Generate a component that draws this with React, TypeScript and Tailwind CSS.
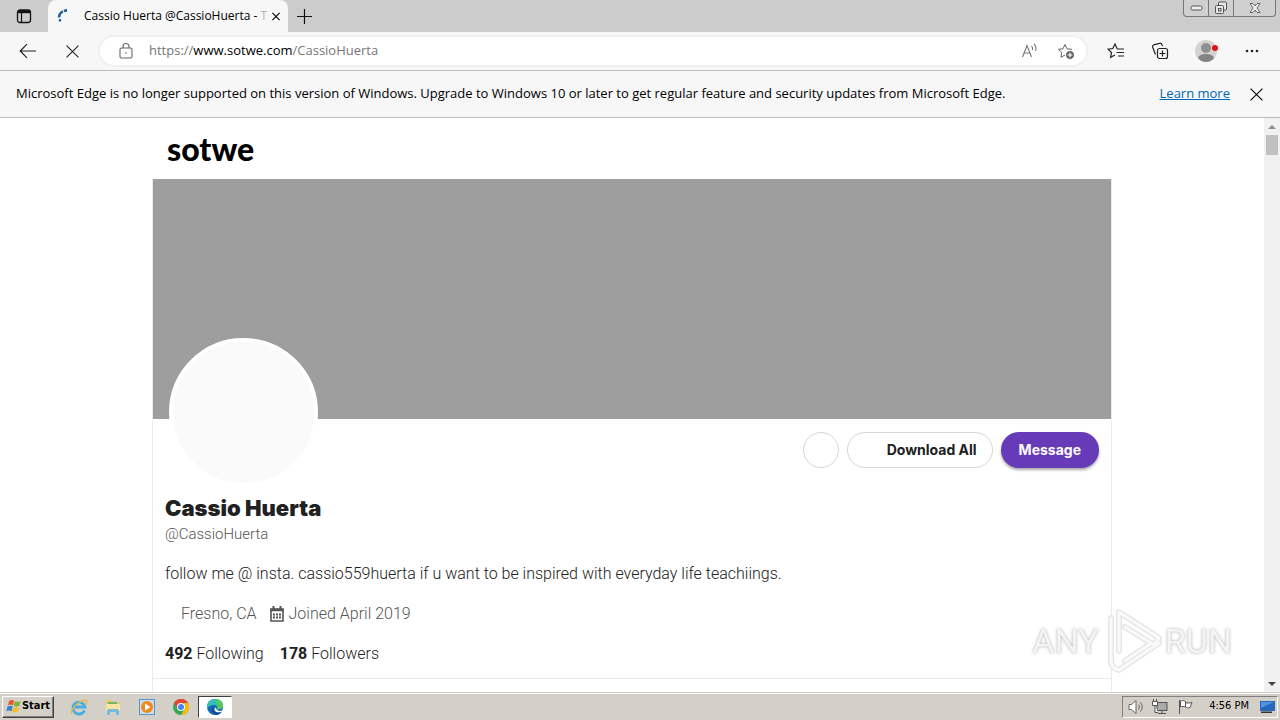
import type { ReactNode } from "react";
import { clsx } from "clsx";

interface IconButtonProps {
  label: string;
  className?: string;
  children: ReactNode;
}

function IconButton({ label, className, children }: IconButtonProps) {
  return (
    <button
      type="button"
      aria-label={label}
      className={clsx("flex shrink-0 items-center justify-center", className)}
    >
      {children}
    </button>
  );
}

function CrossIcon({ size, width = 1 }: { size: number; width?: number }) {
  return (
    <svg width={size} height={size} viewBox="0 0 12 12" fill="none" stroke="currentColor" strokeWidth={width}>
      <path d="M.5.5l11 11M11.5.5l-11 11" />
    </svg>
  );
}

function TabStrip() {
  return (
    <div className="flex h-8 shrink-0 items-start bg-[#cccccc]">
      <IconButton label="Tab actions" className="h-8 w-12">
        <svg width="16" height="16" viewBox="0 0 16 16" fill="none" stroke="#111">
          <rect x="1.5" y="2" width="13" height="12.5" rx="2.5" strokeWidth="1.3" />
          <path d="M2 3.7h12" strokeWidth="3" />
          <path d="M5.5 5v9" strokeWidth="1.2" />
        </svg>
      </IconButton>
      <div className="flex h-8 w-60 items-center rounded-t-lg bg-[#f7f7f7] pr-2 pl-2">
        <svg width="16" height="16" viewBox="0 0 16 16" fill="none" stroke="#1c639b" strokeWidth="2.6" className="shrink-0">
          <path d="M3 9.500C3.200 6 5 4.200 7 3.400" />
          <path d="M8 3c1-.4 2-.6 3-.6" />
          <circle cx="4" cy="12.300" r=".7" strokeWidth="1.400" />
        </svg>
        <span className="ml-3 w-[183px] whitespace-nowrap text-[12px] text-black">
          Cassio Huerta @CassioHuerta - <span className="text-[#b5b5b5]">T</span>
        </span>
        <IconButton label="Close tab" className="ml-auto h-4 w-2 text-black">
          <CrossIcon size={9} width={1.8} />
        </IconButton>
      </div>
      <IconButton label="New tab" className="h-8 w-8">
        <svg width="15" height="15" viewBox="0 0 15 15" stroke="#111" strokeWidth="1.2">
          <path d="M7.5 0v15M0 7.5h15" />
        </svg>
      </IconButton>
      <div className="mr-1 ml-auto flex h-[17px] divide-x divide-[#777] overflow-hidden rounded-b border border-t-0 border-[#777] bg-[#d0d0d0]">
        <IconButton label="Minimize" className="w-[25px]">
          <svg width="13" height="6" viewBox="0 0 13 6" fill="#eee" stroke="#555">
            <rect x="1" y="1" width="11" height="4" rx="1.5" />
          </svg>
        </IconButton>
        <IconButton label="Restore" className="w-[25px]">
          <svg width="14" height="14" viewBox="0 0 14 14" fill="#e6e6e6" stroke="#555">
            <rect x="4.5" y="1" width="8" height="8" rx="1" />
            <rect x="1.5" y="4.5" width="8" height="8" rx="1" />
            <rect x="4.5" y="7.5" width="2.5" height="2.5" />
          </svg>
        </IconButton>
        <IconButton label="Close window" className="w-[41px]">
          <svg width="12" height="10" viewBox="0 0 12 10" fill="#eee" stroke="#666">
            <path d="M1 .5h3L6 3 8 .5h3L8 5l3 4.500H8L6 7 4 9.500H1L4 5z" />
          </svg>
        </IconButton>
      </div>
    </div>
  );
}

const STAR = "M8 1.500l2 4.300 4.600.5-3.400 3.200.9 4.800L8 12l-4.100 2.300.9-4.800L1.400 6.300 6 5.800z";

function Toolbar() {
  return (
    <div className="flex h-[39px] shrink-0 items-center border-b border-[#bdbdbd] bg-[#f7f7f7] pl-[6px] text-[#222]">
      <IconButton label="Back" className="h-8 w-11">
        <svg width="18" height="16" viewBox="0 0 18 16" fill="none" stroke="currentColor" strokeWidth="1.2">
          <path d="M17 8H1.500M8 1.200L1.200 8 8 14.800" />
        </svg>
      </IconButton>
      <IconButton label="Stop" className="h-8 w-11">
        <CrossIcon size={13} />
      </IconButton>
      <div className="ml-1 flex h-8 min-w-0 flex-1 items-center rounded-full border-2 border-[#f0f0f0] bg-white pl-[18px]">
        <svg width="16" height="18" viewBox="0 0 16 18" fill="none" stroke="#666" strokeWidth="1.1" className="shrink-0">
          <rect x="2" y="6" width="12" height="10" rx="1.5" />
          <path d="M5 6V4.500a3 3 0 016 0V6" />
          <circle cx="8" cy="11" r=".8" fill="#666" stroke="none" />
        </svg>
        <div className="relative ml-[15px] min-w-0 flex-1 text-[13px]">
          <div aria-hidden="true" className="whitespace-nowrap text-[#767676]">
            https://<span className="text-black">www.sotwe.com</span>/CassioHuerta
          </div>
          <input
            aria-label="Address"
            defaultValue="https://www.sotwe.com/CassioHuerta"
            className="absolute inset-0 w-full bg-transparent text-transparent outline-none"
          />
        </div>
        <IconButton label="Read aloud" className="h-7 w-9 text-[#777]">
          <svg width="18" height="16" viewBox="0 0 18 16" fill="none" stroke="currentColor" strokeWidth="1.1">
            <path d="M1.500 14L6 2.500 10.500 14M3 10h6" />
            <path d="M10.500 3q1.500 1.500 1 4M13 1q3 3 1.500 7" />
          </svg>
        </IconButton>
        <IconButton label="Add to favorites" className="mr-[2px] h-7 w-9 text-[#666]">
          <svg width="18" height="17" viewBox="0 0 18 17" fill="none" stroke="currentColor">
            <path d={STAR} />
            <circle cx="13" cy="12" r="4.5" fill="#666" stroke="#fff" />
            <path d="M13 9.700v4.600M10.700 12h4.600" stroke="#fff" strokeWidth="1.2" />
          </svg>
        </IconButton>
      </div>
      <IconButton label="Favorites" className="ml-[6px] h-8 w-11">
        <svg width="18" height="16" viewBox="0 0 18 16" fill="none" stroke="currentColor" strokeWidth="1.2">
          <path d="M10.500 5.500H10L8 1 5.800 5.500 1 6.200l3.500 3.300-.9 4.900L8 12" />
          <path d="M10 6h7M9.500 9.500H17M11 13h6" />
        </svg>
      </IconButton>
      <IconButton label="Collections" className="h-8 w-11">
        <svg width="18" height="18" viewBox="0 0 18 18" fill="none" stroke="currentColor" strokeWidth="1.2">
          <rect x="6.5" y="6.5" width="10" height="10" rx="2" />
          <path d="M11.500 8.500v6M8.500 11.500h6M4.500 12.500L1.700 5.300a2 2 0 011.100-2.500l5.600-1.500a2 2 0 012.500 1.200l.6 1.500" />
        </svg>
      </IconButton>
      <IconButton label="Profile" className="h-8 w-12">
        <svg width="26" height="24" viewBox="0 0 26 24">
          <circle cx="13" cy="12" r="11" fill="#d5d3d1" />
          <circle cx="13" cy="9" r="5" fill="#918f91" />
          <path d="M5 19c1-3 4-4 8-4s7 1 8 4c-2 2.500-5 4-8 4s-6-1.500-8-4z" fill="#858385" />
          <circle cx="22" cy="9" r="3" fill="#e3101c" />
        </svg>
      </IconButton>
      <IconButton label="Settings and more" className="mr-[6px] h-8 w-11">
        <svg width="14" height="4" viewBox="0 0 14 4" fill="currentColor">
          <circle cx="2" cy="2" r="1.3" />
          <circle cx="7" cy="2" r="1.3" />
          <circle cx="12" cy="2" r="1.3" />
        </svg>
      </IconButton>
    </div>
  );
}

function InfoBar() {
  return (
    <div className="flex h-[47px] shrink-0 items-center border-b border-[#bdbdbd] bg-[#f7f7f7] pr-3 pl-4 text-[13px] text-black">
      <p className="flex-1 whitespace-nowrap">
        Microsoft Edge is no longer supported on this version of Windows. Upgrade to Windows 10 or later to get regular
        feature and security updates from Microsoft Edge.
      </p>
      <a href="#learn-more" className="text-[#0067b8] underline">
        Learn more
      </a>
      <IconButton label="Dismiss" className="ml-[14px] h-6 w-6">
        <CrossIcon size={13} />
      </IconButton>
    </div>
  );
}

function CalendarIcon() {
  return (
    <svg width="16" height="16" viewBox="0 0 16 16" fill="none" stroke="#555" className="shrink-0">
      <path d="M2 3h12v12H2z" strokeWidth="1.6" />
      <path d="M1.500 4h13" strokeWidth="2.5" />
      <path d="M4.500 0v3M11.500 0v3" strokeWidth="2" />
      <path d="M4 8.500h8M4 11.500h8" strokeWidth="1.8" strokeDasharray="2 1" />
    </svg>
  );
}

function Profile() {
  return (
    <main className="mx-auto max-w-[960px] font-['Roboto','Liberation_Sans',sans-serif] font-light text-[#212121]">
      <header className="flex h-[61px] items-center px-[15px]">
        <a href="#home" className="font-['Lato',sans-serif] text-[32px] leading-8 font-black text-black">
          sotwe
        </a>
      </header>
      <section className="border-x border-[#ebebeb]">
        <div className="h-60 bg-[#9e9e9e]" />
        <div className="flex items-start justify-between pr-3 pl-4">
          <div className="-mt-[81px] h-[149px] w-[149px] rounded-full border-4 border-white bg-[#fafafa]" />
          <div className="mt-[13px] flex gap-2 font-['Inter',sans-serif] text-[14px] leading-5 font-bold">
            <button type="button" aria-label="Refresh" className="h-9 w-9 rounded-full border border-[#d6d6d6]" />
            <button type="button" className="h-9 rounded-full border border-[#d6d6d6] pr-[15px] pl-[39px]">
              Download All
            </button>
            <button
              type="button"
              className="h-9 rounded-full bg-[#673ab7] px-[18px] text-white shadow-[0_2px_3px_rgba(0,0,0,0.35)]"
            >
              Message
            </button>
          </div>
        </div>
        <div className="border-b border-[#ebebeb] px-3 pb-3">
          <h1 className="mt-[7px] font-['Inter',sans-serif] text-[22px] leading-7 font-black">Cassio Huerta</h1>
          <p className="text-[15px] leading-6 text-[#555]">@CassioHuerta</p>
          <p className="mt-4 text-[16px] leading-6">
            follow me @ insta. cassio559huerta if u want to be inspired with everyday life teachiings.
          </p>
          <div className="mt-4 flex gap-3 pl-4 text-[16px] leading-6 text-[#555]">
            <span>Fresno, CA</span>
            <span className="flex items-center gap-1">
              <CalendarIcon />
              Joined April 2019
            </span>
          </div>
          <div className="mt-4 flex gap-4 text-[16px] leading-6">
            <a href="#following">
              <b className="font-bold">492</b> Following
            </a>
            <a href="#followers">
              <b className="font-bold">178</b> Followers
            </a>
          </div>
        </div>
        <div className="h-10" />
      </section>
    </main>
  );
}

function Scrollbar() {
  return (
    <div className="flex w-4 shrink-0 flex-col items-center bg-[#f1f1f1]">
      <svg width="16" height="17" viewBox="0 0 16 17" fill="#8c8c8c">
        <path d="M4 11l4-4 4 4z" />
      </svg>
      <div className="h-5 w-3 bg-[#c1c1c1]" />
      <svg width="16" height="17" viewBox="0 0 16 17" fill="#444" className="mt-auto">
        <path d="M4 7l4 4 4-4z" />
      </svg>
    </div>
  );
}

function Watermark() {
  const play = "M20 5l40 26-5 7-29-18M20 5v39M12 11v45M20 63l40-27M26 54l25-17M12 56q3 6 8 7";
  return (
    <div className="pointer-events-none absolute right-12 bottom-4 flex items-center font-['Roboto',sans-serif] text-[34px] leading-[70px] text-[#f4f4f4] [text-shadow:0_0_3px_#aaa]">
      <span>ANY</span>
      <svg width="66" height="68" viewBox="0 0 66 68" fill="none" strokeLinejoin="round" strokeLinecap="round">
        <path d={play} stroke="#e6e6e6" strokeWidth="6" />
        <path d={play} stroke="#fafafa" strokeWidth="3" />
      </svg>
      <span>RUN</span>
    </div>
  );
}

function WindowsFlag() {
  return (
    <svg width="16" height="15" viewBox="0 0 15 14" className="shrink-0">
      <path d="M3 1.500c2-1 3-.8 4.500.2L6.500 6C5 5 3.500 5 1.800 5.800z" fill="#e8562a" />
      <path d="M8.300 2c1.700 1 3.400 1 5.500 0l-1.200 4.300c-2 1-3.700.9-5.300 0z" fill="#7ab536" />
      <path d="M1.500 6.800c2-.8 3.200-.8 4.800.2L5.200 11.500C3.600 10.500 2.200 10.500.3 11.300z" fill="#3a7fd0" />
      <path d="M7 7.400c1.600.9 3.300 1 5.300.1L11 12c-2 .9-3.500.8-5.200-.1z" fill="#f6bd27" />
    </svg>
  );
}

const taskbarApps: { name: string; icon: ReactNode }[] = [
  {
    name: "Internet Explorer",
    icon: (
      <svg width="18" height="18" viewBox="0 0 18 18" fill="none">
        <path d="M14.500 12.500a6 6 0 11.400-3.500H5" stroke="#45aee5" strokeWidth="2.8" />
        <path d="M2 16C-1 13 9 2 16 2c2 1 0 4-1 5" stroke="#e7b83e" strokeWidth="1.3" />
      </svg>
    ),
  },
  {
    name: "Windows Explorer",
    icon: (
      <svg width="18" height="18" viewBox="0 0 18 18">
        <path d="M2 2h6l1 2h7v10H2z" fill="#e9cc69" />
        <path d="M4 4h9v4H4z" fill="#6db36b" />
        <path d="M2 6h14v7H2z" fill="#f7e6a2" />
        <path d="M3 17v-4q0-2 2-2h8q2 0 2 2v4h-3v-3H6v3z" fill="#78b9de" />
      </svg>
    ),
  },
  {
    name: "Media Player",
    icon: (
      <svg width="18" height="18" viewBox="0 0 18 18">
        <rect x="1.5" y="1.5" width="15" height="15" fill="#c8dff2" stroke="#5b94c8" />
        <circle cx="9" cy="9" r="6" fill="#f08a1c" />
        <path d="M7 5.500l5.500 3.500L7 12.500z" fill="#fff" />
      </svg>
    ),
  },
  {
    name: "Chrome",
    icon: (
      <svg width="18" height="18" viewBox="0 0 18 18">
        <circle cx="9" cy="9" r="8" fill="#34a853" />
        <path d="M2.100 5A8 8 0 0116 5H9l-3.500 6z" fill="#ea4335" />
        <path d="M16 5a8 8 0 01-7 12l3.500-6L12 5z" fill="#fbbc05" />
        <circle cx="9" cy="9" r="4" fill="#fff" />
        <circle cx="9" cy="9" r="3" fill="#4285f4" />
      </svg>
    ),
  },
  {
    name: "Microsoft Edge",
    icon: (
      <svg width="18" height="18" viewBox="0 0 18 18">
        <circle cx="9" cy="9" r="8" fill="#1769b5" />
        <path d="M1 9C1 4 5 1 9 1c5 0 8 3 8 6.500 0 3-3 4.500-6 3.500 1-2 0-4-3-4-3 0-6 1-7 4z" fill="#34bfb4" />
        <path d="M10 1c4 0 7 3 7 6.500 0 3-3 4.500-6 3.500 1-1 1-2 .5-3z" fill="#55c95d" />
        <path d="M8 8c-2 3 0 7 5 6.500 1 0 2-.5 3-1C15 15 13 16.500 11 17 5 16 4 10 8 8z" fill="#124b93" />
        <path d="M10 9.500c0 3 3 4 6.500 3l-.5 1c-4 2-8 0-7.500-3z" fill="#fff" />
      </svg>
    ),
  },
];

function Taskbar() {
  return (
    <footer className="flex h-7 shrink-0 items-center border-t border-[#d4d0c8] bg-[#d4d0c8] pl-[2px] shadow-[inset_0_1px_0_#fff]">
      <button
        type="button"
        className="flex h-[22px] w-[52px] items-center justify-center border border-t-white border-r-[#404040] border-b-[#404040] border-l-white font-['DejaVu_Sans_Condensed','Liberation_Sans',sans-serif] text-[11px] font-bold text-black shadow-[inset_-1px_-1px_0_#808080]"
      >
        <WindowsFlag />
        Start
      </button>
      <nav aria-label="Taskbar" className="ml-2 flex">
        {taskbarApps.map((app) => (
          <button
            key={app.name}
            type="button"
            aria-label={app.name}
            className={clsx(
              "flex h-[22px] w-[34px] items-center justify-center border",
              app.name === "Microsoft Edge"
                ? "border-t-[#404040] border-r-white border-b-white border-l-[#404040] bg-white"
                : "border-transparent",
            )}
          >
            {app.icon}
          </button>
        ))}
      </nav>
      <div className="mr-[2px] ml-auto flex h-[22px] items-center border border-t-[#808080] border-r-white border-b-white border-l-[#808080] pl-1 text-black">
        <svg width="20" height="18" viewBox="0 0 20 18" fill="#fff" stroke="#666">
          <path d="M2 6.500h2.500L9 2.500v13L4.500 11.500H2z" />
          <path d="M11.500 6.500q2 2.500 0 5M13.500 4.500q3.500 4.500 0 9" fill="none" />
        </svg>
        <svg width="18" height="18" viewBox="0 0 18 18" fill="#fff" stroke="#555" className="ml-1">
          <rect x="6" y="4.5" width="10" height="8" fill="#aaa" />
          <path d="M1.500 3.500h5v4h-5zM2.500 1v2M5.500 1v2M4 7.500v7h3M7 15.500h8M11 13v2" />
        </svg>
        <svg width="18" height="18" viewBox="0 0 18 18" fill="#fff" stroke="#555" className="ml-2">
          <path d="M2.500 2v14M3.500 3c3-1 4 0 5 .5V9c-2-1-3-.5-5 0zM8.500 4.500c2 1 4 .5 6.500 0L13 9.500c-2 .5-3 .5-4.500-.5" />
        </svg>
        <time className="ml-[14px] font-['DejaVu_Sans_Condensed',sans-serif] text-[11px]">4:56 PM</time>
        <svg width="18" height="18" viewBox="0 0 18 18" className="ml-[10px]">
          <rect x="1" y="3" width="15" height="10" fill="#2767bd" />
          <path d="M2 4h13L2 10z" fill="#4e93dc" />
          <path d="M2 13.500h11v1.500H2z" fill="#333" />
        </svg>
      </div>
    </footer>
  );
}

export default function App() {
  return (
    <div className="flex h-screen flex-col overflow-hidden bg-white font-['Open_Sans','Noto_Sans',sans-serif]">
      <TabStrip />
      <Toolbar />
      <InfoBar />
      <div className="relative flex min-h-0 flex-1">
        <div className="min-w-0 flex-1 overflow-hidden">
          <Profile />
        </div>
        <Scrollbar />
        <Watermark />
      </div>
      <Taskbar />
    </div>
  );
}
